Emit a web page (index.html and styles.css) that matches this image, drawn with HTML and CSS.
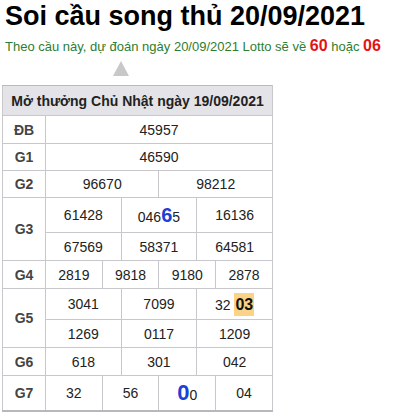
FILE: index.html
```html
<!DOCTYPE html>
<html lang="vi">
<head>
<meta charset="utf-8">
<title>Soi cầu song thủ 20/09/2021</title>
<link rel="stylesheet" href="styles.css">
</head>
<body>
<h1 class="title">Soi cầu song thủ 20/09/2021</h1>
<p class="predict">Theo cầu này, dự đoán ngày 20/09/2021 Lotto sẽ về <b class="num">60</b> hoặc <b class="num">06</b></p>
<div class="arrow"></div>
<table class="kq">
  <colgroup>
    <col class="c-label">
    <col><col><col><col><col><col><col><col><col><col><col><col>
  </colgroup>
  <tr class="head"><th colspan="13">Mở thưởng Chủ Nhật ngày 19/09/2021</th></tr>
  <tr><td class="lbl">ĐB</td><td colspan="12">45957</td></tr>
  <tr class="r-s"><td class="lbl">G1</td><td colspan="12">46590</td></tr>
  <tr class="r-s"><td class="lbl">G2</td><td colspan="6">96670</td><td colspan="6">98212</td></tr>
  <tr class="r-g3a"><td class="lbl" rowspan="2">G3</td><td colspan="4">61428</td><td colspan="4">046<span class="hit">6</span>5</td><td colspan="4">16136</td></tr>
  <tr><td colspan="4">67569</td><td colspan="4">58371</td><td colspan="4">64581</td></tr>
  <tr><td class="lbl">G4</td><td colspan="3">2819</td><td colspan="3">9818</td><td colspan="3">9180</td><td colspan="3">2878</td></tr>
  <tr class="r-g5a"><td class="lbl" rowspan="2">G5</td><td colspan="4">3041</td><td colspan="4">7099</td><td colspan="4">32 <span class="mark">03</span></td></tr>
  <tr><td colspan="4">1269</td><td colspan="4">0117</td><td colspan="4">1209</td></tr>
  <tr><td class="lbl">G6</td><td colspan="4">618</td><td colspan="4">301</td><td colspan="4">042</td></tr>
  <tr class="r-g7"><td class="lbl">G7</td><td colspan="3">32</td><td colspan="3">56</td><td colspan="3"><span class="hit big">0</span>0</td><td colspan="3">04</td></tr>
</table>
</body>
</html>
```
FILE: styles.css
```css
* { box-sizing: border-box; }
body {
  margin: 0;
  padding: 0 2px;
  font-family: "Liberation Sans", Arial, sans-serif;
  color: #222;
  background: #fff;
}
.title {
  margin: 0;
  padding-left: 3px;
  font-size: 27px;
  line-height: 32px;
  font-weight: bold;
  color: #000;
}
.predict {
  margin: 4px 0 0;
  padding-left: 3px;
  font-size: 13px;
  line-height: 20px;
  color: #2e7d32;
}
.predict .num {
  color: #e31414;
  font-size: 16px;
}
.arrow {
  width: 0;
  height: 0;
  margin: 4px 0 9px 111px;
  border-left: 8px solid transparent;
  border-right: 8px solid transparent;
  border-bottom: 15px solid #c8c8c8;
}
.kq {
  border-collapse: collapse;
  table-layout: fixed;
  width: 271px;
  border-bottom: 2px solid #b8b8bc;
}
.c-label { width: 43px; }
.kq th, .kq td {
  border: 1px solid #c8c8cc;
  padding: 0;
  text-align: center;
  vertical-align: middle;
  font-size: 14px;
  height: 28px;
}
.kq .head th {
  height: 30px;
  background: #e4e4e8;
  color: #222;
  font-weight: bold;
  border-top-color: #b8b8c0;
}
.kq td { color: #222; }
.kq td.lbl {
  font-weight: bold;
  color: #444;
}
.r-s td { height: 27px; }
.r-g3a td { height: 35px; }
.r-g5a td { height: 31px; }
.r-g7 td { height: 35px; }
.hit {
  color: #1d3fd6;
  font-weight: bold;
  font-size: 20px;
}
.hit.big { font-size: 22px; }
.mark {
  display: inline-block;
  padding: 2px 1px;
  line-height: 19px;
  font-size: 16px;
  font-weight: bold;
  color: #111;
  background: #fbd387;
}
```
